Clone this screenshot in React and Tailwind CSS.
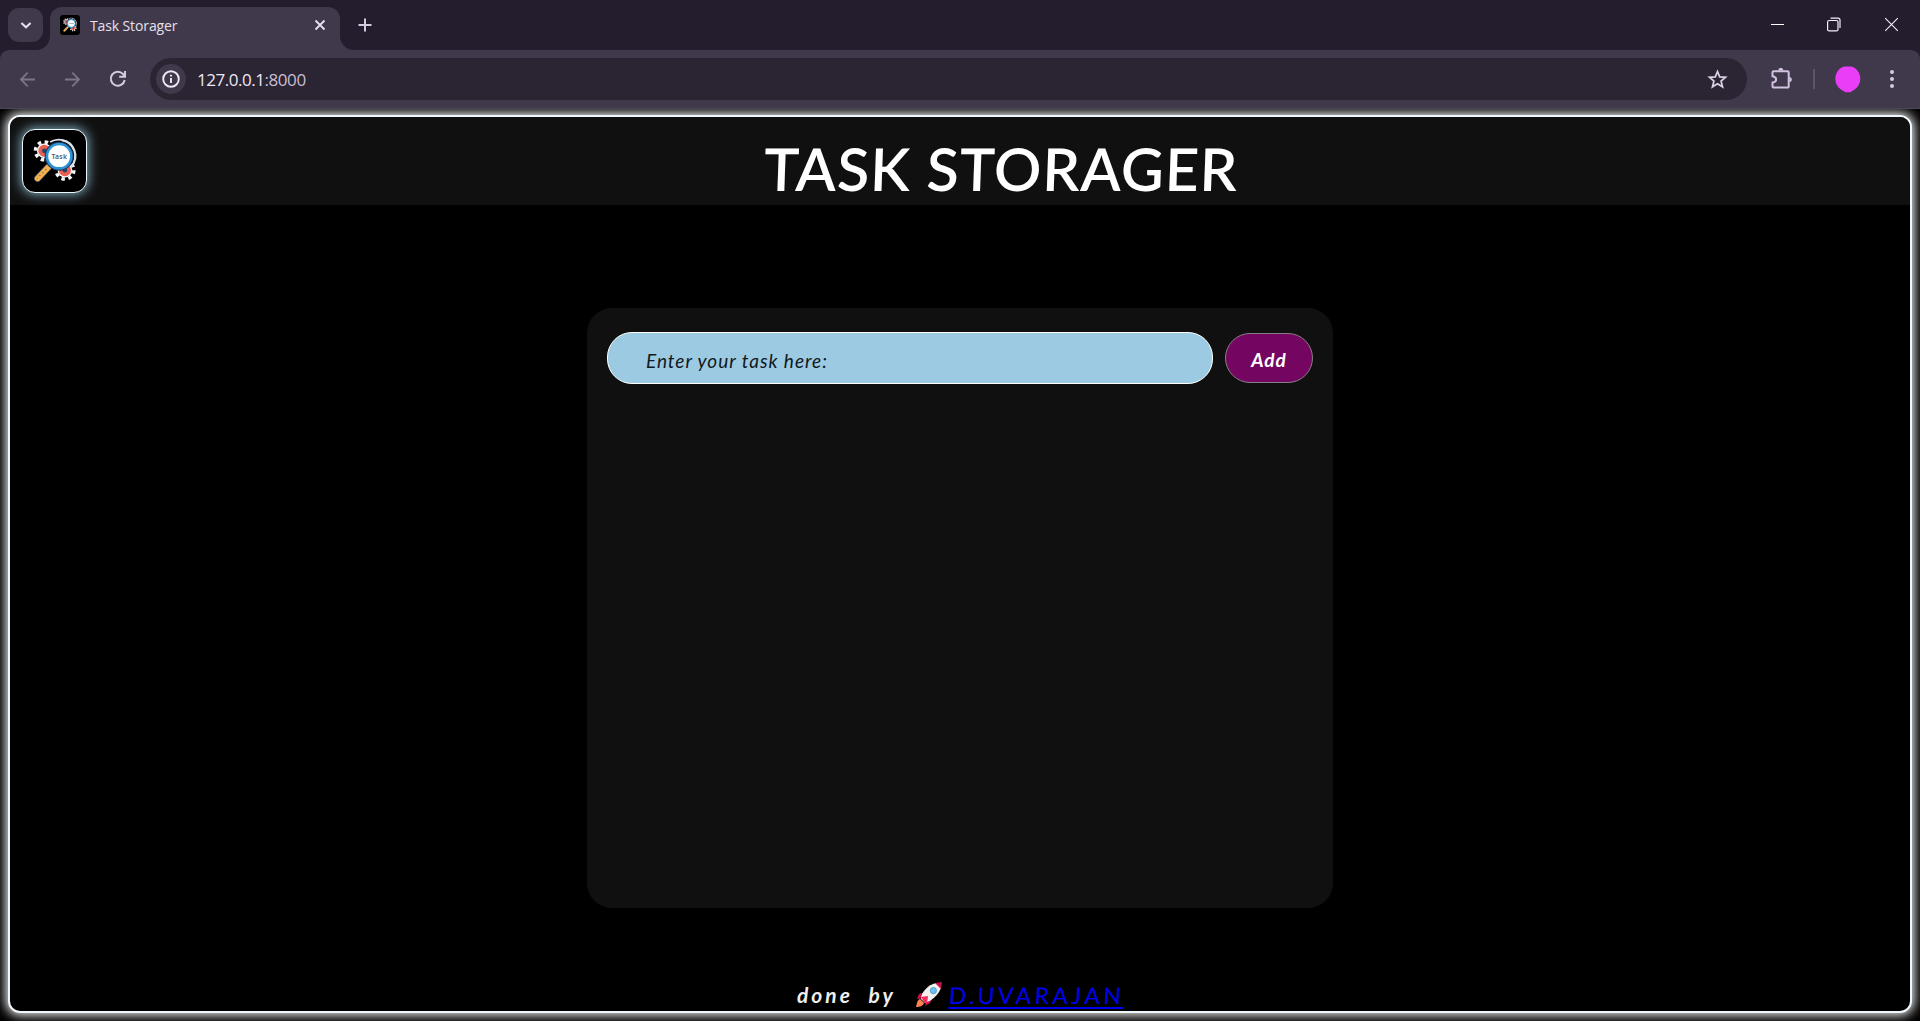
import React from "react";

function Gear({ x, y, scale = 1 }) {
  return (
    <g transform={`translate(${x} ${y}) scale(${scale})`}>
      <circle r="9.2" fill="none" stroke="#f4f8fb" strokeWidth="3.6" strokeDasharray="3.6 3.63" />
      <circle r="7.6" fill="#f4f8fb" />
      <circle r="4.3" fill="#28466a" stroke="#ec5f50" strokeWidth="3.8" />
    </g>
  );
}

function Logo({ className }) {
  return (
    <svg className={className} viewBox="0 0 64 64" aria-hidden="true">
      <Gear x={21} y={21.5} />
      <Gear x={42.3} y={41.5} />
      <path d="M39 10.5A16.5 16.5 0 0 1 48.5 38" fill="none" stroke="#dce1e8" strokeWidth="2.4" />
      <path d="M27 12.5A17 17 0 0 1 41 10.8" fill="none" stroke="#dce1e8" strokeWidth="1.8" />
      <path d="M25 38.5 14 50" stroke="#233a5c" strokeWidth="7.4" strokeLinecap="round" />
      <path d="M25 38.5 14 50" stroke="#f2b14e" strokeWidth="6" strokeLinecap="round" />
      <path d="M23 40.5 13.5 50" stroke="#8a6230" strokeWidth="1.3" strokeDasharray="1.3 3" />
      <circle cx="36.3" cy="27" r="15" fill="#1c3656" />
      <circle cx="36.3" cy="27" r="12.6" fill="#fff" stroke="#2c93d6" strokeWidth="2.6" />
      <text x="36.3" y="29.5" textAnchor="middle" fontSize="7" fontWeight="600" fill="#4a5d72" fontFamily="Noto Sans, sans-serif" textLength="16">Task</text>
    </svg>
  );
}

function Rocket() {
  return (
    <svg className="h-[26px] w-[27px] shrink-0" viewBox="0 0 27 26" aria-hidden="true">
      <path d="M9 10 3 12 1 17 8 16ZM16 17 14 21 9 24 11 17Z" fill="#c8114a" />
      <path d="M4 17C1 18 1 22 0 25 4 25 7 24 8 21Z" fill="#ff8050" />
      <path d="M5 17C5 10 12 3 20 1L25 6C22 13 17 18 9 21Z" fill="#f2eff0" />
      <path d="M19 1 26 0 25 7C23 5 21 3 19 1Z" fill="#c8114a" />
      <path d="M5 15 12 14 11 22 8 20Z" fill="#f52d5c" />
      <circle cx="17.4" cy="8.6" r="3.1" fill="#6cc2ee" stroke="#428cc0" strokeWidth=".8" />
    </svg>
  );
}

function TabStrip() {
  return (
    <div className="flex h-[50px] items-start bg-[#231d2d]">
      <button className="mt-2 ml-2 grid h-[34px] w-[35px] shrink-0 place-items-center rounded-[11px] bg-[#40384b]">
        <svg className="size-4" viewBox="0 0 16 16" fill="none" stroke="#e7e0ed" strokeWidth="2"><path d="m3.4 6 4.6 4.3L12.6 6" /></svg>
      </button>
      <div className="relative mt-[7px] ml-[7px] flex h-[43px] w-[290px] shrink-0 items-start rounded-t-[12px] bg-[#40384b] pt-2 pl-[10px]">
        <svg className="absolute bottom-0 -left-[14px] size-[14px]" viewBox="0 0 14 14"><path d="M0 14A14 14 0 0 0 14 0V14Z" fill="#40384b" /></svg>
        <svg className="absolute -right-[14px] bottom-0 size-[14px]" viewBox="0 0 14 14"><path d="M14 14A14 14 0 0 1 0 0V14Z" fill="#40384b" /></svg>
        <div className="size-5 overflow-hidden rounded-[3px] bg-black"><Logo className="size-5" /></div>
        <span className="mt-px ml-[10px] font-['Open_Sans',sans-serif] text-[14px] leading-[20px] tracking-[-0.12px] text-[#e6e0ec]">Task Storager</span>
        <svg className="mt-[4px] mr-[14px] ml-auto size-3" viewBox="0 0 12 12" stroke="#e7e0ed" strokeWidth="1.8"><path d="m1.5 1.5 9 9m0-9-9 9" /></svg>
      </div>
      <svg className="mt-[18px] ml-[18px] size-[14px]" viewBox="0 0 14 14" stroke="#d5cadf" strokeWidth="2"><path d="M.5 7h13M7 .5v13" /></svg>
      <div className="mt-[17px] mr-[21px] ml-auto flex gap-[42px]">
        <svg className="h-[15px] w-[15px]" viewBox="0 0 15 15" stroke="#fff" strokeWidth="1"><path d="M1 7.5h13" /></svg>
        <svg className="h-[15px] w-[15px]" viewBox="0 0 15 15" fill="none" stroke="#f4f0f7" strokeWidth="1.2"><rect x="0.6" y="3.5" width="10.4" height="10.4" rx="1.5" /><path d="M3.5 1.2H11a2 2 0 0 1 2 2V11" /></svg>
        <svg className="h-[15px] w-[15px]" viewBox="0 0 15 15" stroke="#f4f0f7" strokeWidth="1.1"><path d="m1.2 1.2 12.6 12.6m0-12.6L1.2 13.8" /></svg>
      </div>
    </div>
  );
}

function Toolbar() {
  return (
    <div className="bg-[#231d2d]">
      <div className="flex h-[59px] items-center rounded-t-[9px] border-b border-[#4c4656] bg-[#40384b] pl-[19px]">
        <svg className="size-[17px]" viewBox="0 0 17 17" fill="none" stroke="#7d7488" strokeWidth="1.8"><path d="M16 8.5H2M8.7 1.7 2 8.5l6.7 6.8" /></svg>
        <svg className="ml-[28px] size-[17px]" viewBox="0 0 17 17" fill="none" stroke="#7d7488" strokeWidth="1.8"><path d="M1 8.5h14M8.3 1.7 15 8.5l-6.7 6.8" /></svg>
        <svg className="ml-[28px] size-[18px]" viewBox="0 0 18 18" fill="none" stroke="#d5cadf" strokeWidth="2"><path d="M15.7 10A7 7 0 1 1 14 4l1.5 1.8M16 1v5.8h-5.8" /></svg>
        <div className="ml-[23px] flex h-[42px] w-[1597px] shrink-0 items-center rounded-full bg-[#2b2433] pr-[19px] pl-[6px]">
          <div className="grid size-[30px] place-items-center rounded-full bg-[#40384b]">
            <svg className="size-[18px]" viewBox="0 0 18 18" fill="none" stroke="#f1eaf6" strokeWidth="1.9"><circle cx="9" cy="9" r="7.8" /><path d="M9 8v5M9 4.8v1.8" /></svg>
          </div>
          <span className="mt-px ml-[11px] font-['Open_Sans',sans-serif] text-[17px] leading-[24px] tracking-[-0.46px] text-[#eee8f3]">127.0.0.1<span className="text-[#c8bfd1]">:8000</span></span>
          <svg className="ml-auto size-[21px]" viewBox="0 0 21 21" fill="none" stroke="#d9cfe2" strokeWidth="1.8"><path d="m10.5 2.5 2.2 5.3 5.8.5-4.4 3.8 1.4 5.7-5-3-5 3 1.4-5.7-4.4-3.8 5.8-.5Z" /></svg>
        </div>
        <svg className="ml-[23px] size-[22px]" viewBox="0 0 22 22" fill="none" stroke="#d1c3df" strokeWidth="2"><path d="M3.5 3.2h14a1.2 1.2 0 0 1 1.2 1.2v14a1.2 1.2 0 0 1-1.2 1.2h-14a1 1 0 0 1-1-1v-4c4.8-.8 4.8-5.5 0-6.3V4.2a1 1 0 0 1 1-1Z" /><path d="M8.3 2.4a2.5 2.5 0 0 1 5 0ZM19.3 8.9a2.5 2.5 0 0 1 0 5Z" fill="#d1c3df" stroke="none" /></svg>
        <div className="ml-[21px] h-5 w-[2px] bg-[#5d5269]" />
        <svg className="ml-[20px] h-[27px] w-[26px]" viewBox="0 0 26 27"><path d="M9 .5h7.5C21.5 2 25.3 7 25.3 12.8 25.3 17.5 23 21 19.5 23.5L15.5 26.3h-5L6 23.5C2.5 21 .3 17.5 .3 12.8 .3 7 4 2 9 .5Z" fill="#ea3df7" /></svg>
        <svg className="ml-[28px] h-5 w-[6px]" viewBox="0 0 6 20" fill="#d5cadf"><circle cx="3" cy="3" r="2" /><circle cx="3" cy="10" r="2" /><circle cx="3" cy="17" r="2" /></svg>
      </div>
    </div>
  );
}

export default function App() {
  return (
    <div className="flex h-screen w-screen flex-col overflow-hidden bg-black">
      <TabStrip />
      <Toolbar />
      <div className="flex-1 overflow-hidden px-2 pt-[6px] pb-2">
        <div className="flex h-full flex-col overflow-hidden rounded-[12px] border-2 border-[aliceblue] bg-black font-[Lato,sans-serif] shadow-[0_0_12px_2px_white]">
          <header className="flex h-[88px] shrink-0 items-center bg-[#101010] pl-3">
            <div className="grid h-[64px] w-[65px] shrink-0 place-items-center rounded-[13px] border border-[aliceblue] bg-black shadow-[0_0_12px_1px_#87b4c8]">
              <Logo className="size-[62px]" />
            </div>
            <h1 className="mt-[15px] ml-[677px] -skew-x-2 text-[59px] leading-[72px] font-semibold tracking-[0.9px] whitespace-nowrap text-white">TASK STORAGER</h1>
          </header>
          <main className="mx-auto mt-[103px] h-[600px] w-[746px] shrink-0 rounded-[25px] bg-[#101010] px-5 pt-6">
            <form className="flex items-center gap-3" onSubmit={(e) => e.preventDefault()}>
              <input aria-label="Task" placeholder="Enter your task here:" className="h-[52px] w-[606px] rounded-[25px] border border-white bg-[#9ccae2] pt-1 pl-[38px] text-[19px] tracking-[0.98px] text-black italic outline-none placeholder:text-[#101820]" />
              <button className="h-[50px] w-[88px] rounded-[25px] border border-[#858085] bg-[#740661] pt-1 text-[19px] font-bold tracking-[1px] text-white italic">Add</button>
            </form>
          </main>
          <footer className="mt-auto flex h-[33px] items-center pl-[787px] whitespace-nowrap">
            <span className="text-[21px] leading-[30px] font-bold tracking-[3px] text-[#eee] italic [word-spacing:8px]">done by</span>
            <span className="ml-[20px]"><Rocket /></span>
            <a href="#profile" className="ml-[6px] -skew-x-3 text-[23px] leading-[30px] tracking-[3.4px] text-[#0000ee] underline decoration-2 underline-offset-[3px]">D.UVARAJAN</a>
          </footer>
        </div>
      </div>
    </div>
  );
}
